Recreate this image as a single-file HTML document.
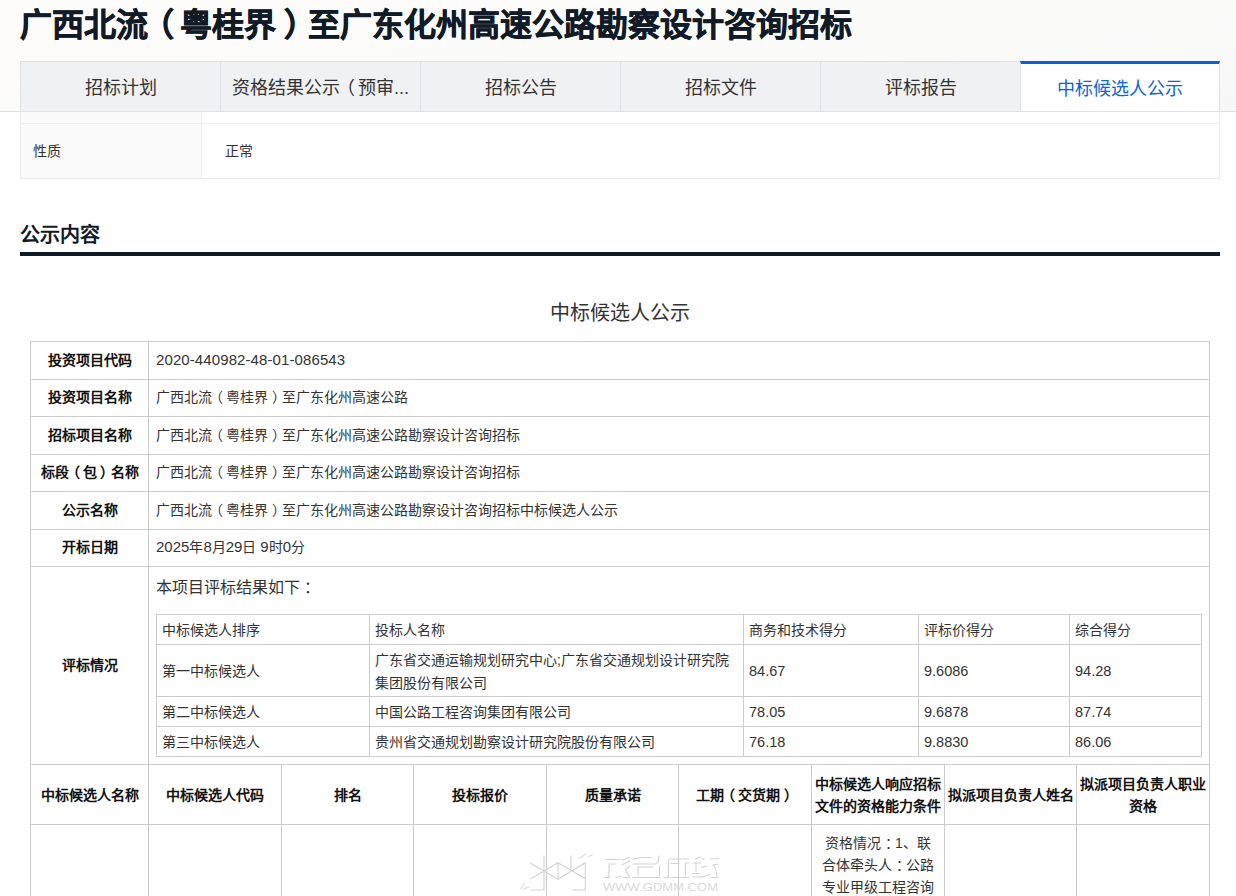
<!DOCTYPE html>
<html lang="zh-CN"><head><meta charset="utf-8">
<style>
*{margin:0;padding:0;box-sizing:border-box}
html,body{width:1236px;height:896px;overflow:hidden;background:#fff;font-family:"Liberation Sans",sans-serif;color:#333}
.a{position:absolute}
.h{position:absolute;height:1px;background:#ccc}
.v{position:absolute;width:1px;background:#ccc}
.c{position:absolute;display:flex;align-items:center;white-space:nowrap;font-size:14px;line-height:22px}
.cc{justify-content:center;text-align:center}
.b{font-weight:bold;color:#111}
.lp{position:relative;left:-0.18em}.rp{position:relative;left:0.25em}.co{position:relative;left:0.25em}
.n{font-size:15px}.n2{font-size:14.5px}
.tab{position:absolute;top:61px;width:200px;height:50px;background:#f0f1f3;border-left:1px solid #dfe0e3;border-top:1px solid #dfe0e3;display:flex;align-items:center;justify-content:center;font-size:18px;color:#333;white-space:nowrap;padding-bottom:2px}
</style></head><body>
<!-- header background -->
<div class="a" style="left:0;top:0;width:1236px;height:111px;background:linear-gradient(172deg,#fdfcfb 0%,#fbfbfa 55%,#f7f7f7 100%)"></div>
<div class="a" style="left:0;top:111px;width:1236px;height:1px;background:#dfe0e3"></div>
<div class="a" style="left:20px;top:0;height:50px;line-height:50px;font-size:32px;font-weight:bold;color:#111a27;-webkit-text-stroke:0.6px #111a27;white-space:nowrap">广西北流<span class="lp">（</span>粤桂界<span class="rp">）</span>至广东化州高速公路勘察设计咨询招标</div>

<div class="tab" style="left:20px">招标计划</div>
<div class="tab" style="left:220px">资格结果公示<span class="lp">（</span>预审...</div>
<div class="tab" style="left:420px">招标公告</div>
<div class="tab" style="left:620px">招标文件</div>
<div class="tab" style="left:820px">评标报告</div>
<div class="tab" style="left:1020px;background:#fff;border-top:3px solid #0a5fd7;color:#0c64d8;border-right:1px solid #dfe0e3">中标候选人公示</div>

<!-- info box -->
<div class="a" style="left:20px;top:112px;width:181px;height:66px;background:#fafafa"></div>
<div class="a" style="left:20px;top:112px;width:1px;height:67px;background:#ebebeb"></div>
<div class="a" style="left:1219px;top:112px;width:1px;height:67px;background:#ebebeb"></div>
<div class="a" style="left:201px;top:112px;width:1px;height:66px;background:#efefef"></div>
<div class="a" style="left:20px;top:123px;width:1200px;height:1px;background:#efefef"></div>
<div class="a" style="left:20px;top:178px;width:1200px;height:1px;background:#ebebeb"></div>
<div class="c" style="left:33px;top:124px;height:54px"><span>性质</span></div>
<div class="c" style="left:225px;top:124px;height:54px"><span>正常</span></div>

<!-- section heading -->
<div class="a" style="left:20px;top:219px;height:32px;line-height:32px;font-size:20px;font-weight:bold;color:#111a27">公示内容</div>
<div class="a" style="left:20px;top:252px;width:1200px;height:4px;background:#0f1a28"></div>

<div class="a" style="left:30px;top:298px;width:1180px;height:30px;line-height:30px;text-align:center;font-size:20px;color:#333">中标候选人公示</div>

<!-- main table lines -->
<div class="h" style="left:30px;top:341px;width:1180px"></div>
<div class="h" style="left:30px;top:379px;width:1180px"></div>
<div class="h" style="left:30px;top:416px;width:1180px"></div>
<div class="h" style="left:30px;top:454px;width:1180px"></div>
<div class="h" style="left:30px;top:491px;width:1180px"></div>
<div class="h" style="left:30px;top:529px;width:1180px"></div>
<div class="h" style="left:30px;top:566px;width:1180px"></div>
<div class="h" style="left:30px;top:764px;width:1180px"></div>
<div class="h" style="left:30px;top:824px;width:1180px"></div>
<div class="v" style="left:30px;top:341px;height:555px"></div>
<div class="v" style="left:148px;top:341px;height:555px"></div>
<div class="v" style="left:1209px;top:341px;height:555px"></div>
<div class="v" style="left:281px;top:764px;height:132px"></div>
<div class="v" style="left:413px;top:764px;height:132px"></div>
<div class="v" style="left:546px;top:764px;height:132px"></div>
<div class="v" style="left:678px;top:764px;height:132px"></div>
<div class="v" style="left:811px;top:764px;height:132px"></div>
<div class="v" style="left:944px;top:764px;height:132px"></div>
<div class="v" style="left:1076px;top:764px;height:132px"></div>

<!-- main rows -->
<div class="c cc b" style="left:31px;top:342px;padding-bottom:2px;width:117px;height:37px"><span>投资项目代码</span></div>
<div class="c" style="left:156px;top:342px;padding-bottom:2px;height:37px"><span><span class="n" style="letter-spacing:0.1px">2020-440982-48-01-086543</span></span></div>
<div class="c cc b" style="left:31px;top:380px;padding-bottom:2px;width:117px;height:36px"><span>投资项目名称</span></div>
<div class="c" style="left:156px;top:380px;padding-bottom:2px;height:36px"><span>广西北流<span class="lp">（</span>粤桂界<span class="rp">）</span>至广东化州高速公路</span></div>
<div class="c cc b" style="left:31px;top:417px;padding-bottom:2px;width:117px;height:37px"><span>招标项目名称</span></div>
<div class="c" style="left:156px;top:417px;padding-bottom:2px;height:37px"><span>广西北流<span class="lp">（</span>粤桂界<span class="rp">）</span>至广东化州高速公路勘察设计咨询招标</span></div>
<div class="c cc b" style="left:31px;top:455px;padding-bottom:2px;width:117px;height:36px"><span>标段<span class="lp">（</span>包<span class="rp">）</span>名称</span></div>
<div class="c" style="left:156px;top:455px;padding-bottom:2px;height:36px"><span>广西北流<span class="lp">（</span>粤桂界<span class="rp">）</span>至广东化州高速公路勘察设计咨询招标</span></div>
<div class="c cc b" style="left:31px;top:492px;padding-bottom:2px;width:117px;height:37px"><span>公示名称</span></div>
<div class="c" style="left:156px;top:492px;padding-bottom:2px;height:37px"><span>广西北流<span class="lp">（</span>粤桂界<span class="rp">）</span>至广东化州高速公路勘察设计咨询招标中标候选人公示</span></div>
<div class="c cc b" style="left:31px;top:530px;padding-bottom:2px;width:117px;height:36px"><span>开标日期</span></div>
<div class="c" style="left:156px;top:530px;padding-bottom:2px;height:36px"><span><span class="n">2025</span>年<span class="n">8</span>月<span class="n">29</span>日 <span class="n">9</span>时<span class="n">0</span>分</span></div>
<div class="c cc b" style="left:31px;top:567px;padding-bottom:2px;width:117px;height:197px"><span>评标情况</span></div>
<div class="c" style="left:156px;top:576px;height:24px;font-size:16px"><span>本项目评标结果如下<span class="co">：</span></span></div>

<!-- inner table -->
<div class="h" style="left:156px;top:614px;width:1046px"></div>
<div class="h" style="left:156px;top:644px;width:1046px"></div>
<div class="h" style="left:156px;top:696px;width:1046px"></div>
<div class="h" style="left:156px;top:726px;width:1046px"></div>
<div class="h" style="left:156px;top:756px;width:1046px"></div>
<div class="v" style="left:156px;top:614px;height:143px"></div>
<div class="v" style="left:369px;top:614px;height:143px"></div>
<div class="v" style="left:743px;top:614px;height:143px"></div>
<div class="v" style="left:918px;top:614px;height:143px"></div>
<div class="v" style="left:1069px;top:614px;height:143px"></div>
<div class="v" style="left:1201px;top:614px;height:143px"></div>

<div class="c" style="left:162px;top:615px;height:29px"><span>中标候选人排序</span></div>
<div class="c" style="left:375px;top:615px;height:29px"><span>投标人名称</span></div>
<div class="c" style="left:749px;top:615px;height:29px"><span>商务和技术得分</span></div>
<div class="c" style="left:924px;top:615px;height:29px"><span>评标价得分</span></div>
<div class="c" style="left:1075px;top:615px;height:29px"><span>综合得分</span></div>

<div class="c" style="left:162px;top:645px;height:51px"><span>第一中标候选人</span></div>
<div class="c" style="left:375px;top:645px;height:51px;line-height:23px;padding-top:2px"><span>广东省交通运输规划研究中心;广东省交通规划设计研究院<br>集团股份有限公司</span></div>
<div class="c" style="left:749px;top:645px;height:51px"><span><span class="n2">84.67</span></span></div>
<div class="c" style="left:924px;top:645px;height:51px"><span><span class="n2">9.6086</span></span></div>
<div class="c" style="left:1075px;top:645px;height:51px"><span><span class="n2">94.28</span></span></div>

<div class="c" style="left:162px;top:697px;height:29px"><span>第二中标候选人</span></div>
<div class="c" style="left:375px;top:697px;height:29px"><span>中国公路工程咨询集团有限公司</span></div>
<div class="c" style="left:749px;top:697px;height:29px"><span><span class="n2">78.05</span></span></div>
<div class="c" style="left:924px;top:697px;height:29px"><span><span class="n2">9.6878</span></span></div>
<div class="c" style="left:1075px;top:697px;height:29px"><span><span class="n2">87.74</span></span></div>

<div class="c" style="left:162px;top:727px;height:29px"><span>第三中标候选人</span></div>
<div class="c" style="left:375px;top:727px;height:29px"><span>贵州省交通规划勘察设计研究院股份有限公司</span></div>
<div class="c" style="left:749px;top:727px;height:29px"><span><span class="n2">76.18</span></span></div>
<div class="c" style="left:924px;top:727px;height:29px"><span><span class="n2">9.8830</span></span></div>
<div class="c" style="left:1075px;top:727px;height:29px"><span><span class="n2">86.06</span></span></div>

<!-- bottom header -->
<div class="c cc b" style="left:31px;top:765px;width:117px;height:59px"><span>中标候选人名称</span></div>
<div class="c cc b" style="left:149px;top:765px;width:132px;height:59px"><span>中标候选人代码</span></div>
<div class="c cc b" style="left:282px;top:765px;width:131px;height:59px"><span>排名</span></div>
<div class="c cc b" style="left:414px;top:765px;width:132px;height:59px"><span>投标报价</span></div>
<div class="c cc b" style="left:547px;top:765px;width:131px;height:59px"><span>质量承诺</span></div>
<div class="c cc b" style="left:679px;top:765px;width:132px;height:59px"><span>工期<span class="lp">（</span>交货期<span class="rp">）</span></span></div>
<div class="c cc b" style="left:812px;top:765px;width:132px;height:59px;white-space:normal"><span>中标候选人响应招标<br>文件的资格能力条件</span></div>
<div class="c cc b" style="left:945px;top:765px;width:131px;height:59px"><span>拟派项目负责人姓名</span></div>
<div class="c cc b" style="left:1077px;top:765px;width:132px;height:59px;white-space:normal"><span>拟派项目负责人职业<br>资格</span></div>

<div class="a" style="left:812px;top:832px;width:132px;font-size:14px;line-height:22px;text-align:center;color:#333">资格情况<span class="co">：</span>1、联<br>合体牵头人<span class="co">：</span>公路<br>专业甲级工程咨询</div>
<svg class="a" style="left:0;top:0" width="1236" height="896" viewBox="0 0 1236 896" fill="none" stroke="#d2d2d2" stroke-width="1.1" stroke-linecap="square">
<path d="M531 863.5L558 879.3M531 878.8L558 862.8M558 863V879M558 879.3L585.3 862.8M558 862.8L585.3 878.8M571 856V871.7M585.3 863V890H573M544 856V890H531"/>
<path d="M580 858L586 854M588 857L592 855M521 889L525 883M524 889L529 887" stroke-width="1"/>
<path d="M606 859.5H620M622 860L629.5 857.5M615 864H609V877.5H604M622.5 864.5L629.5 861M629.5 866L625.5 870L629.5 877M616 877.5L621 876M623.5 877.5H629.5"/>
<path d="M633 859L639 858M640 857.5H651M633 864H655Q658.5 864 659 856M653 867H638V875M659.5 866V876M633 877.5H659.5"/>
<path d="M688.5 859H670Q668.5 859 668.5 861V877.5H664M671 863.5H679M688.5 863H685.5V875M671 877.5H688.5"/>
<path d="M695.5 859L700 857M702 859H704M693 863H700.5M696 864V871M693 873.5H700M693 877H701M702 867.5L707 866M702 877L710 874M711 859L718 858.5M713 865L718 864M714 866L716 870M716 872L717 876M712 877.5H718"/>
<text x="603" y="890.5" fill="#dadada" stroke="none" font-family="Liberation Sans, sans-serif" font-size="11.5" textLength="115" lengthAdjust="spacingAndGlyphs">WWW.GDMM.COM</text>
</svg>
</body></html>
